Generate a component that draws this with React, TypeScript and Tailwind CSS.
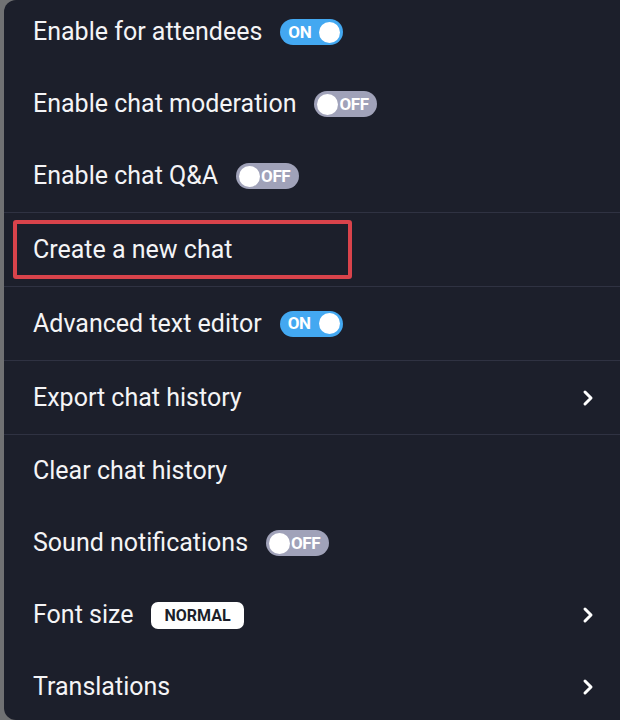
import React from 'react';
import { ChevronRight } from 'lucide-react';

type Row =
  | { kind: 'toggle'; label: string; on: boolean }
  | { kind: 'plain'; label: string; highlight?: boolean }
  | { kind: 'submenu'; label: string; badge?: string };

function Toggle({ on }: { on: boolean }) {
  if (on) {
    return (
      <div className="flex h-[26px] w-[63px] items-center justify-between rounded-full bg-[#43a8f1] pl-[8px] pr-[3px]">
        <span className="text-[17px] font-bold leading-none tracking-tight text-white">ON</span>
        <span className="h-[21px] w-[21px] rounded-full bg-white" />
      </div>
    );
  }
  return (
    <div className="flex h-[26px] w-[63px] items-center gap-[1px] rounded-full bg-[#a0a2b9] pl-[3px] pr-[4px]">
      <span className="h-[21px] w-[21px] rounded-full bg-white" />
      <span className="text-[17px] font-bold leading-none tracking-tight text-white">OFF</span>
    </div>
  );
}

function MenuRow({ row, tall }: { row: Row; tall?: boolean }) {
  const h = tall ? 'h-[73px]' : 'h-[72px]';

  if (row.kind === 'plain' && row.highlight) {
    return (
      <div className={`flex ${h} items-center pl-[9px]`}>
        <div className="flex h-[59px] w-[339px] items-center rounded-[3px] border-4 border-[#d9434b] pl-[16px]">
          {row.label}
        </div>
      </div>
    );
  }

  return (
    <div className={`flex ${h} items-center gap-[18px] pl-[29px] pr-5`}>
      <span>{row.label}</span>
      {row.kind === 'toggle' && <Toggle on={row.on} />}
      {row.kind === 'submenu' && row.badge && (
        <span className="rounded-[7px] bg-white px-[13px] py-[5px] text-[16px] font-bold leading-[17px] text-[#1c1f2b]">
          {row.badge}
        </span>
      )}
      {row.kind === 'submenu' && (
        <ChevronRight className="ml-auto text-white" size={24} strokeWidth={3} />
      )}
    </div>
  );
}

export default function App() {
  const top: Row[] = [
    { kind: 'toggle', label: 'Enable for attendees', on: true },
    { kind: 'toggle', label: 'Enable chat moderation', on: false },
    { kind: 'toggle', label: 'Enable chat Q&A', on: false },
  ];
  const middle: Row[] = [
    { kind: 'plain', label: 'Create a new chat', highlight: true },
    { kind: 'toggle', label: 'Advanced text editor', on: true },
    { kind: 'submenu', label: 'Export chat history' },
  ];
  const bottom: Row[] = [
    { kind: 'plain', label: 'Clear chat history' },
    { kind: 'toggle', label: 'Sound notifications', on: false },
    { kind: 'submenu', label: 'Font size', badge: 'NORMAL' },
    { kind: 'submenu', label: 'Translations' },
  ];

  return (
    <div className="h-[720px] w-[620px] overflow-hidden bg-[#707173] pl-1">
      <div
        className="h-full overflow-hidden rounded-l-[12px] bg-[#1c1f2b] text-[25px] text-[#f4f4f6]"
        style={{ fontFamily: 'Roboto, "Liberation Sans", sans-serif' }}
      >
        <div className="-mt-1">
          {top.map((r) => (
            <MenuRow key={r.label} row={r} />
          ))}
          {middle.map((r) => (
            <div key={r.label} className="border-t border-[#2f3242]">
              <MenuRow row={r} tall />
            </div>
          ))}
          <div className="border-t border-[#2f3242]">
            {bottom.map((r) => (
              <MenuRow key={r.label} row={r} />
            ))}
          </div>
        </div>
      </div>
    </div>
  );
}
